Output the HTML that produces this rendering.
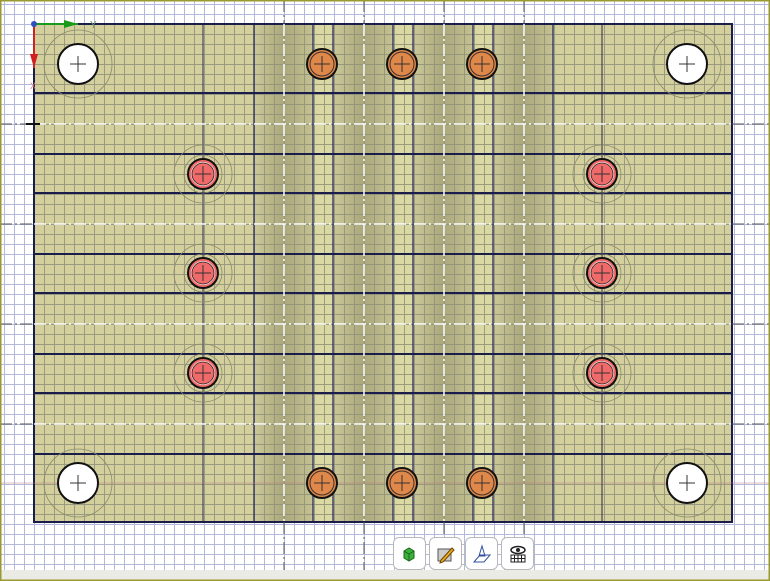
<!DOCTYPE html>
<html><head><meta charset="utf-8"><style>
html,body{margin:0;padding:0;width:770px;height:581px;overflow:hidden;background:#fff}
svg{display:block}
.btn{position:absolute;top:537px;width:31px;height:31px;border:1px solid #b8b8b8;border-radius:6px;background:#fff}
</style></head><body>
<svg width="770" height="581" viewBox="0 0 770 581" xmlns="http://www.w3.org/2000/svg">
<defs>
<pattern id="g" x="4" y="4" width="10" height="10" patternUnits="userSpaceOnUse">
<path d="M0 0.5H10M0.5 0V10" stroke="#b4b9da" stroke-width="1" fill="none"/></pattern>
<pattern id="g2" x="4" y="4" width="10" height="10" patternUnits="userSpaceOnUse">
<path d="M0 0.5H10M0.5 0V10" stroke="#8f917a" stroke-width="1" fill="none" opacity="0.85"/></pattern>
<linearGradient id="band" x1="0" x2="1" y1="0" y2="0">
<stop offset="0" stop-color="#cbc898"/><stop offset="0.5" stop-color="#aaa87c"/><stop offset="1" stop-color="#c4c192"/></linearGradient>
</defs>
<rect width="770" height="581" fill="#fff"/>
<rect width="770" height="581" fill="url(#g)"/>
<rect x="34" y="24" width="698" height="498" fill="#d3d09e"/>
<rect x="254" y="24" width="59" height="498" fill="url(#band)"/>
<rect x="333" y="24" width="60" height="498" fill="url(#band)"/>
<rect x="413" y="24" width="60" height="498" fill="url(#band)"/>
<rect x="493" y="24" width="60" height="498" fill="url(#band)"/>
<rect x="313" y="24" width="20" height="498" fill="#dbd9a3"/>
<rect x="393" y="24" width="20" height="498" fill="#dbd9a3"/>
<rect x="473" y="24" width="20" height="498" fill="#dbd9a3"/>
<rect x="34" y="24" width="698" height="498" fill="url(#g2)"/>
<g stroke="#1c1f5a" stroke-width="1.2" fill="none">
<path d="M254 24V522M313 24V522M333 24V522M393 24V522M413 24V522M473 24V522M493 24V522M553 24V522"/>
</g>
<path d="M203 24V522M602 24V522" stroke="#2a2c50" stroke-width="1"/>
<g stroke="#1a1c4a" stroke-width="2" fill="none">
<rect x="34" y="24" width="698" height="498"/>
<path d="M34 93H732M34 154H732M34 193H732M34 254H732M34 293H732M34 354H732M34 393H732M34 454H732"/>
</g>
<path d="M0 483H770" stroke="#c07070" stroke-width="0.7" opacity="0.6"/>
<g stroke="#fff" stroke-width="1.5" stroke-dasharray="12 3 2 3" fill="none">
<path d="M34 124H732M34 224H732M34 324H732M34 424H732"/>
<path d="M284 24V522M364 24V522M444 24V522M524 24V522"/>
</g>
<g stroke="#555" stroke-width="1" stroke-dasharray="12 3 2 3" fill="none">
<path d="M0 124H34M732 124H770M0 224H34M732 224H770M0 324H34M732 324H770M0 424H34M732 424H770"/>
<path d="M284 0V24M364 0V24M444 0V24M524 0V24M284 522V570M364 522V570M444 522V570M524 522V570"/>
</g>
<g fill="none" stroke="#8a8a6a" stroke-width="0.8">
<circle cx="78" cy="64" r="34"/><circle cx="687" cy="64" r="34"/><circle cx="78" cy="483" r="34"/><circle cx="687" cy="483" r="34"/>
<circle cx="203" cy="174" r="29"/><circle cx="203" cy="273" r="29"/><circle cx="203" cy="373" r="29"/>
<circle cx="602" cy="174" r="29"/><circle cx="602" cy="273" r="29"/><circle cx="602" cy="373" r="29"/>
<circle cx="203" cy="174" r="19"/><circle cx="203" cy="273" r="19"/><circle cx="203" cy="373" r="19"/>
<circle cx="602" cy="174" r="19"/><circle cx="602" cy="273" r="19"/><circle cx="602" cy="373" r="19"/>
</g>
<g fill="#fff" stroke="#111" stroke-width="2">
<circle cx="78" cy="64" r="20"/><circle cx="687" cy="64" r="20"/><circle cx="78" cy="483" r="20"/><circle cx="687" cy="483" r="20"/>
</g>
<g fill="#f06a6a" stroke="#111" stroke-width="2">
<circle cx="203" cy="174" r="15"/><circle cx="203" cy="273" r="15"/><circle cx="203" cy="373" r="15"/>
<circle cx="602" cy="174" r="15"/><circle cx="602" cy="273" r="15"/><circle cx="602" cy="373" r="15"/>
</g>
<g fill="#e0874a" stroke="#111" stroke-width="2">
<circle cx="322" cy="64" r="15"/><circle cx="402" cy="64" r="15"/><circle cx="482" cy="64" r="15"/>
<circle cx="322" cy="483" r="15"/><circle cx="402" cy="483" r="15"/><circle cx="482" cy="483" r="15"/>
</g>
<g fill="none" stroke="#333" stroke-width="1">
<circle cx="322" cy="64" r="12"/><circle cx="402" cy="64" r="12"/><circle cx="482" cy="64" r="12"/>
<circle cx="322" cy="483" r="12"/><circle cx="402" cy="483" r="12"/><circle cx="482" cy="483" r="12"/>
</g>
<g fill="#fff" stroke="none" opacity="0.9">
<circle cx="203" cy="174" r="12"/><circle cx="203" cy="273" r="12"/><circle cx="203" cy="373" r="12"/>
<circle cx="602" cy="174" r="12"/><circle cx="602" cy="273" r="12"/><circle cx="602" cy="373" r="12"/>
</g>
<g fill="#f06a6a" stroke="#222" stroke-width="0.8">
<circle cx="203" cy="174" r="11"/><circle cx="203" cy="273" r="11"/><circle cx="203" cy="373" r="11"/>
<circle cx="602" cy="174" r="11"/><circle cx="602" cy="273" r="11"/><circle cx="602" cy="373" r="11"/>
</g>
<g stroke="#333" stroke-width="1" fill="none">
<path d="M70 64H86M78 56V72M679 64H695M687 56V72M70 483H86M78 475V491M679 483H695M687 475V491"/>
<path d="M195 174H211M203 166V182M195 273H211M203 265V281M195 373H211M203 365V381"/>
<path d="M594 174H610M602 166V182M594 273H610M602 265V281M594 373H610M602 365V381"/>
<path d="M314 64H330M322 56V72M394 64H410M402 56V72M474 64H490M482 56V72"/>
<path d="M314 483H330M322 475V491M394 483H410M402 475V491M474 483H490M482 475V491"/>
</g>
<path d="M34 24H78" stroke="#1a9a1a" stroke-width="2"/><path d="M64 20L78 24L64 28Z" fill="#1a9a1a"/>
<text x="90" y="28" font-family="Liberation Sans,sans-serif" font-size="10" fill="#6a9a6a">Y</text>
<path d="M34 24V68" stroke="#d02020" stroke-width="2"/><path d="M30 54L34 68L38 54Z" fill="#d02020"/>
<text x="30" y="89" font-family="Liberation Sans,sans-serif" font-size="9" fill="#e08080">X</text>
<circle cx="34" cy="24" r="3" fill="#3050c0"/>
<path d="M26 124H40" stroke="#111" stroke-width="2"/>
<rect x="0" y="570" width="770" height="11" fill="#ebebe6"/>
<rect x="0.5" y="0.5" width="769" height="580" fill="none" stroke="#9a9a30" stroke-width="2"/>
</svg>
<div class="btn" style="left:393px"><svg width="31" height="31"><path d="M10 13l5-3 5 3v7l-5 3-5-3z" fill="#3bb03b" stroke="#1a6a1a"/><path d="M10 13l5 3 5-3M15 16v7" stroke="#1a6a1a" fill="none"/></svg></div>
<div class="btn" style="left:429px"><svg width="31" height="31"><rect x="8" y="11" width="13" height="12" fill="#ccc" stroke="#555"/><path d="M11 22l11-12 2 2-11 12-3 1z" fill="#e8b020" stroke="#704000"/></svg></div>
<div class="btn" style="left:465px"><svg width="31" height="31"><path d="M8 24l6-7h10l-6 7z" fill="none" stroke="#3050a0"/><path d="M16 8l-3 10h6z" fill="none" stroke="#3050a0"/></svg></div>
<div class="btn" style="left:501px"><svg width="31" height="31"><ellipse cx="16" cy="12" rx="7" ry="3.5" fill="none" stroke="#222" stroke-width="1.5"/><circle cx="16" cy="12" r="2" fill="#222"/><rect x="9" y="17" width="14" height="7" fill="#fff" stroke="#222"/><path d="M9 20.5h14M12.5 17v7M16 17v7M19.5 17v7" stroke="#222"/></svg></div>
</body></html>
